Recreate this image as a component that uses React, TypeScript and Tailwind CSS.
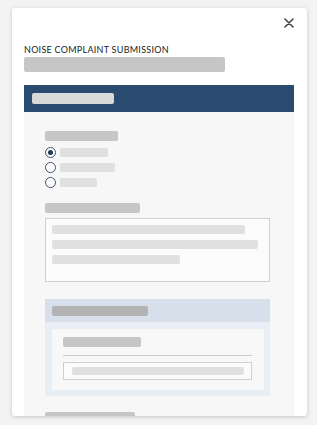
import React from "react";

function Radio({ checked }: { checked?: boolean }) {
  return (
    <span className="flex h-[11px] w-[11px] shrink-0 items-center justify-center rounded-full border-[1.5px] border-[#3a5270] bg-white">
      {checked && <span className="h-[5px] w-[5px] rounded-full bg-[#1e3a5c]" />}
    </span>
  );
}

export default function App() {
  const options = [
    { w: "w-[48px]", checked: true },
    { w: "w-[55px]", checked: false },
    { w: "w-[37px]", checked: false },
  ];
  return (
    <div
      className="h-[425px] w-[317px] overflow-hidden bg-[#f3f3f3] pt-[8px] pl-[12px]"
      style={{ fontFamily: "Lato, 'Open Sans', sans-serif" }}
    >
      <div className="flex h-[408px] w-[295px] flex-col overflow-hidden rounded-[3px] bg-white pl-[12px] pr-[13px] shadow-[0_1px_4px_rgba(0,0,0,0.18)]">
        <div className="flex h-[36px] shrink-0 items-start justify-end pt-[10px]">
          <svg width="10" height="10" viewBox="0 0 10 10">
            <path d="M1 1 L9 9 M9 1 L1 9" stroke="#444" strokeWidth="1.6" strokeLinecap="round" />
          </svg>
        </div>
        <div className="shrink-0 text-[9px] leading-[12px] tracking-[0.03em] text-[#222]">
          NOISE COMPLAINT SUBMISSION
        </div>
        <div className="mt-[1px] h-[15px] w-[201px] shrink-0 rounded-[2px] bg-[#c6c6c6]" />
        <div className="mt-[13px] flex h-[27px] shrink-0 items-center bg-[#284b6f] pl-[8px]">
          <div className="h-[11px] w-[82px] rounded-[2px] bg-[#d9d9d9]" />
        </div>
        <div className="flex flex-1 flex-col bg-[#f7f7f7] pl-[21px] pt-[19px]">
          <div className="h-[10px] w-[73px] shrink-0 rounded-[2px] bg-[#c6c6c6]" />
          <div className="mt-[4px] flex shrink-0 flex-col">
            {options.map((o, i) => (
              <div key={i} className="flex h-[15px] items-center gap-[4px]">
                <Radio checked={o.checked} />
                <div className={`h-[9px] ${o.w} rounded-[2px] bg-[#e0e0e0]`} />
              </div>
            ))}
          </div>
          <div className="mt-[13px] h-[10px] w-[95px] shrink-0 rounded-[2px] bg-[#c6c6c6]" />
          <div className="mt-[5px] flex h-[64px] w-[225px] shrink-0 flex-col gap-[6px] border border-[#cfcfcf] bg-[#fbfbfb] pl-[6px] pt-[6px]">
            <div className="h-[9px] w-[193px] shrink-0 rounded-[2px] bg-[#e0e0e0]" />
            <div className="h-[9px] w-[206px] shrink-0 rounded-[2px] bg-[#e0e0e0]" />
            <div className="h-[9px] w-[128px] shrink-0 rounded-[2px] bg-[#e0e0e0]" />
          </div>
          <div className="mt-[17px] flex w-[225px] shrink-0 flex-col">
            <div className="flex h-[23px] shrink-0 items-center bg-[#d6dfea] pl-[7px]">
              <div className="h-[10px] w-[96px] rounded-[2px] bg-[#b3b3b3]" />
            </div>
            <div className="flex h-[74px] shrink-0 flex-col bg-[#e8eef5] pl-[7px] pr-[6px] pt-[7px]">
              <div className="flex h-[61px] shrink-0 flex-col bg-[#f8f8f8] pl-[11px] pr-[12px] pt-[8px]">
                <div className="h-[10px] w-[78px] shrink-0 rounded-[2px] bg-[#c6c6c6]" />
                <div className="mt-[8px] h-px shrink-0 bg-[#cccccc]" />
                <div className="mt-[6px] flex h-[18px] shrink-0 items-center border border-[#cfcfcf] bg-[#fbfbfb] pl-[8px]">
                  <div className="h-[8px] w-[172px] rounded-[2px] bg-[#e0e0e0]" />
                </div>
              </div>
            </div>
          </div>
          <div className="mt-[16px] h-[10px] w-[90px] shrink-0 rounded-[2px] bg-[#c6c6c6]" />
        </div>
      </div>
    </div>
  );
}
